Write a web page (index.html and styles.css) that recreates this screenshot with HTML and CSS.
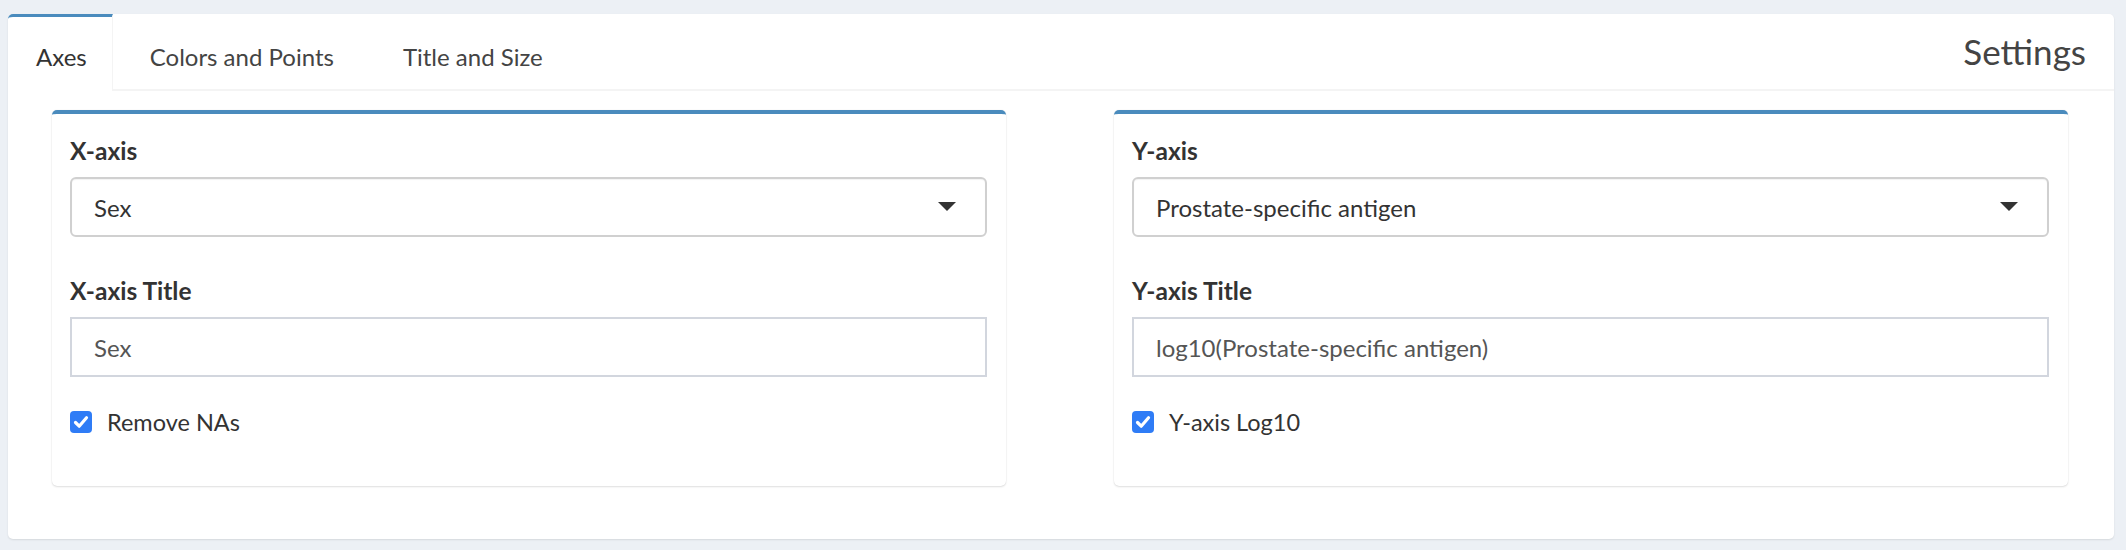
FILE: index.html
```html
<!DOCTYPE html>
<html lang="en">
<head>
<meta charset="utf-8">
<title>Settings</title>
<link rel="stylesheet" href="styles.css">
</head>
<body>
<div class="card">
  <div class="card-head">
    <ul class="tabs">
      <li class="tab active"><a>Axes</a></li>
      <li class="tab"><a>Colors and Points</a></li>
      <li class="tab"><a>Title and Size</a></li>
    </ul>
    <div class="title">Settings</div>
  </div>
  <div class="tab-body">
    <div class="box">
      <label class="field-label">X-axis</label>
      <div class="select">
        <span class="select-value">Sex</span>
        <svg class="caret" width="18" height="9" viewBox="0 0 18 9"><polygon points="0,0 18,0 9,9" fill="#333"/></svg>
      </div>
      <label class="field-label second">X-axis Title</label>
      <div class="text-input">Sex</div>
      <div class="check-row">
        <span class="checkbox"><svg width="22" height="22" viewBox="0 0 22 22"><path d="M5.5 11.5 L9.2 15.2 L16.5 6.8" fill="none" stroke="#fff" stroke-width="3.2" stroke-linecap="round" stroke-linejoin="round"/></svg></span>
        <span class="check-label">Remove NAs</span>
      </div>
    </div>
    <div class="box">
      <label class="field-label">Y-axis</label>
      <div class="select">
        <span class="select-value">Prostate-specific antigen</span>
        <svg class="caret" width="18" height="9" viewBox="0 0 18 9"><polygon points="0,0 18,0 9,9" fill="#333"/></svg>
      </div>
      <label class="field-label second">Y-axis Title</label>
      <div class="text-input">log10(Prostate-specific antigen)</div>
      <div class="check-row">
        <span class="checkbox"><svg width="22" height="22" viewBox="0 0 22 22"><path d="M5.5 11.5 L9.2 15.2 L16.5 6.8" fill="none" stroke="#fff" stroke-width="3.2" stroke-linecap="round" stroke-linejoin="round"/></svg></span>
        <span class="check-label">Y-axis Log10</span>
      </div>
    </div>
  </div>
</div>
</body>
</html>
```
FILE: styles.css
```css
* { box-sizing: border-box; }
html, body { margin: 0; padding: 0; }
body {
  background: #ecf0f5;
  font-family: Lato, "Noto Sans", sans-serif;
  font-size: 23.5px;
  color: #333;
  padding: 14px 12px 11px 8px;
}
.card {
  background: #fff;
  border-radius: 5px;
  box-shadow: 0 1px 2px rgba(0,0,0,0.1);
}
.card-head {
  display: flex;
  align-items: flex-start;
  border-bottom: 2px solid #f4f4f4;
  height: 77px;
}
.tabs {
  list-style: none;
  margin: 0;
  padding: 0;
  display: flex;
  height: 75px;
}
.tab {
  border-top: 3px solid transparent;
  margin-left: 5px;
  font-size: 24px;
}
.tab a {
  display: block;
  padding: 26px 32px 18px;
  line-height: 28px;
  color: #444;
}
.tab.active {
  margin-left: 0;
  border-top-color: #4a8bbd;
  border-top-left-radius: 5px;
  border-right: 1px solid #f4f4f4;
  background: #fff;
  height: 77px;
  position: relative;
}
.tab.active a {
  padding: 26px 25px 18px 28px;
  color: #333;
}
.title {
  margin-left: auto;
  padding: 17px 28px 0 0;
  font-size: 35px;
  line-height: 40px;
  color: #444;
}
.tab-body {
  display: grid;
  grid-template-columns: 1fr 1fr;
  column-gap: 108px;
  padding: 19px 46px 53px 44px;
}
.box {
  border-top: 4px solid #4a8bbd;
  border-radius: 5px;
  box-shadow: 0 0 1px rgba(0,0,0,0.12), 0 1px 2px rgba(0,0,0,0.12);
  padding: 23px 19px 50px 18px;
}
.field-label {
  display: block;
  font-weight: 700;
  font-size: 24.5px;
  line-height: 28px;
  color: #333;
  margin-bottom: 12px;
}
.field-label.second { margin-top: 40px; }
.select {
  height: 60px;
  border: 2px solid #d0d0d0;
  border-radius: 6px;
  display: flex;
  align-items: center;
  justify-content: space-between;
  padding: 0 29px 0 22px;
  color: #333;
  font-size: 24px;
  box-shadow: inset 0 1px 1px rgba(0,0,0,0.05);
}
.caret { display: block; margin-top: -2px; }
.text-input {
  height: 60px;
  border: 2px solid #d2d6de;
  display: flex;
  align-items: center;
  padding: 0 22px;
  color: #555;
  font-size: 24px;
}
.check-row {
  display: flex;
  align-items: center;
  height: 28px;
  margin-top: 31px;
}
.checkbox {
  width: 22px;
  height: 22px;
  border-radius: 4px;
  background: #2f7cf6;
  display: block;
  margin-right: 15px;
}
.checkbox svg { display: block; }
.check-label { line-height: 28px; color: #333; }
```
